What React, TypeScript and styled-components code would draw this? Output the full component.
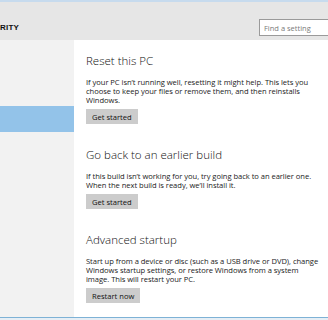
import styled, { createGlobalStyle } from "styled-components";

const GlobalStyle = createGlobalStyle`
  html, body { margin: 0; padding: 0; }
  body {
    width: 328px;
    height: 320px;
    overflow: hidden;
    font-family: "Open Sans", "Liberation Sans", sans-serif;
    background: #e6eef5;
  }
`;

const Window = styled.div`
  display: flex;
  flex-direction: column;
  width: 328px;
  height: 318px;
  border-top: 2px solid #c7dbee;
  border-bottom: 1px solid #7eb2d6;
  box-sizing: border-box;
  overflow: hidden;
`;

const Header = styled.header`
  display: flex;
  align-items: center;
  justify-content: space-between;
  height: 38px;
  padding: 17px 0 4px;
  box-sizing: border-box;
  background: #e6e6e6;
`;

const Section = styled.div`
  font-family: "Liberation Sans", sans-serif;
  font-weight: 700;
  font-size: 8px;
  letter-spacing: 0.2px;
  color: #111;
`;

const Search = styled.input`
  width: 80px;
  height: 17px;
  margin-right: -11px;
  box-sizing: border-box;
  border: 1px solid #9a9a9a;
  background: #fff;
  padding: 0 4px;
  font-family: inherit;
  font-size: 7.5px;
  color: #777;
  outline: none;
  &::placeholder { color: #7a7a7a; }
`;

const Body = styled.div`
  flex: 1;
  display: flex;
  min-height: 0;
`;

const Sidebar = styled.nav`
  width: 74px;
  flex-shrink: 0;
  background: #f2f2f2;
  padding-top: 66px;
  box-sizing: border-box;
`;

const NavItem = styled.div<{ $active?: boolean }>`
  height: 26px;
  background: ${(p) => (p.$active ? "#93c3e9" : "transparent")};
`;

const Content = styled.main`
  flex: 1;
  min-width: 0;
  background: #fff;
  padding: 13px 0 0 12px;
  display: flex;
  flex-direction: column;
`;

const Block = styled.section`
  display: flex;
  flex-direction: column;
  align-items: flex-start;
  margin-bottom: 23px;
`;

const Title = styled.h2`
  margin: 0 0 9px;
  font-weight: 300;
  font-size: 11.5px;
  line-height: 16px;
  color: #111;
`;

const Text = styled.p`
  margin: 0 0 4px;
  font-size: 7.6px;
  line-height: 9px;
  letter-spacing: -0.05px;
  color: #222;
  white-space: nowrap;
`;

const Button = styled.button`
  border: none;
  background: #cccccc;
  height: 15px;
  padding: 0 6px;
  font-family: inherit;
  font-size: 7.6px;
  color: #111;
`;

export default function App() {
  return (
    <>
      <GlobalStyle />
      <Window>
        <Header>
          <Section>RITY</Section>
          <Search placeholder="Find a setting" />
        </Header>
        <Body>
          <Sidebar>
            <NavItem $active />
          </Sidebar>
          <Content>
            <Block>
              <Title>Reset this PC</Title>
              <Text>
                If your PC isn’t running well, resetting it might help. This lets you
                <br />
                choose to keep your files or remove them, and then reinstalls
                <br />
                Windows.
              </Text>
              <Button>Get started</Button>
            </Block>
            <Block>
              <Title>Go back to an earlier build</Title>
              <Text>
                If this build isn’t working for you, try going back to an earlier one.
                <br />
                When the next build is ready, we’ll install it.
              </Text>
              <Button>Get started</Button>
            </Block>
            <Block>
              <Title>Advanced startup</Title>
              <Text>
                Start up from a device or disc (such as a USB drive or DVD), change
                <br />
                Windows startup settings, or restore Windows from a system
                <br />
                image. This will restart your PC.
              </Text>
              <Button>Restart now</Button>
            </Block>
          </Content>
        </Body>
      </Window>
    </>
  );
}
